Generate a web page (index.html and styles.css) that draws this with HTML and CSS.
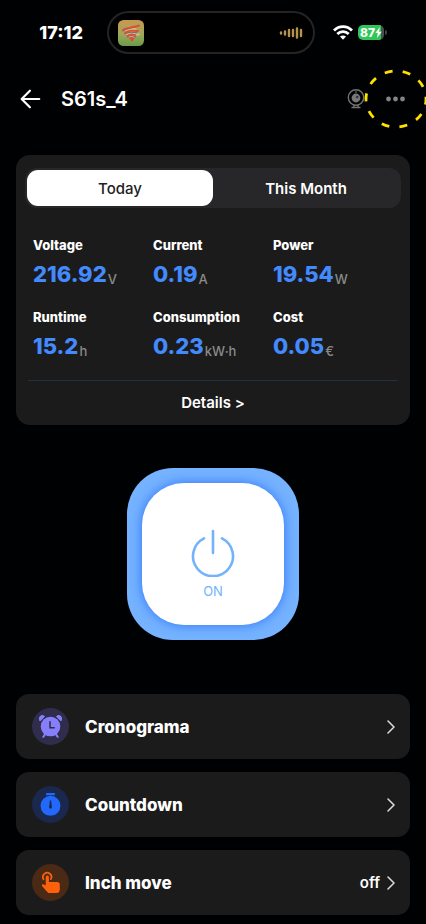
FILE: index.html
```html
<!DOCTYPE html>
<html lang="en">
<head>
<meta charset="utf-8">
<meta name="viewport" content="width=device-width, initial-scale=1">
<title>S61s_4</title>
<link rel="stylesheet" href="styles.css">
</head>
<body>
<div class="status">
  <time class="clock">17:12</time>
  <div class="island">
    <svg class="app-icon" viewBox="0 0 26 26" aria-hidden="true">
      <defs>
        <linearGradient id="tile" x1="0" y1="0" x2="0" y2="1">
          <stop offset="0" stop-color="#c69a50"/>
          <stop offset=".55" stop-color="#9fa75a"/>
          <stop offset="1" stop-color="#689d49"/>
        </linearGradient>
      </defs>
      <rect width="26" height="26" rx="5.5" fill="url(#tile)"/>
      <path d="M7 8l4-2 5 1 4 4 2 4-5 1-3 4-3-4-4-2z" fill="#dfcf8c" opacity=".75"/>
      <g fill="none" stroke-linecap="round">
        <path d="M5 11C9 8 15 8 21 6M7 14c4-3 9-2 13-1M9.500 17c2-2 5-2 8 0" stroke="#776984" stroke-width="1.200"/>
        <path d="M5 10C9 6 15 8 21 5.500M7 13c4-4 8-2 13-2M9.500 16c2-2 5-2 8-1M12 18.500c1-1 2-1 3.500 0" stroke="#df4f30" stroke-width="1.800"/>
      </g>
      <circle cx="14" cy="20" r="1.200" fill="#d64b30"/>
    </svg>
    <svg class="wave" viewBox="0 0 24 12" aria-hidden="true">
      <g stroke="#b6924f" stroke-width="2.400" stroke-linecap="round">
        <path d="M2 5.500v1M6 4.500v3M10 3v6M14 3v6M18 1.500v9M22 3v6"/>
      </g>
    </svg>
  </div>
  <div class="signals">
    <svg class="wifi" viewBox="0 0 20 15" role="img" aria-label="Wi-Fi">
      <g fill="none" stroke="#fff" stroke-width="2.800">
        <path d="M1 5.500C6 .4 14 .4 19 5.500"/>
        <path d="M4.300 9c3.300-3.200 8.100-3.200 11.400 0"/>
      </g>
      <path d="M7 11.600c1.800-1.600 4.200-1.600 6 0L10 14.700z" fill="#fff"/>
    </svg>
    <div class="battery">
      <span>87</span>
      <svg viewBox="0 0 7 11" aria-hidden="true"><path d="M4.800 0L.3 6h2.500L2 11l4.700-6.300H4.100z" fill="#fff"/></svg>
    </div>
    <i class="nub"></i>
  </div>
</div>

<header class="topbar">
  <button class="icon-btn" aria-label="Back">
    <svg class="back" viewBox="0 0 20 18"><path d="M17.500 9H2M9 1.500L1.500 9 9 16.500" fill="none" stroke="#fff" stroke-width="2" stroke-linecap="round" stroke-linejoin="round"/></svg>
  </button>
  <h1>S61s_4</h1>
  <button class="icon-btn camera" aria-label="Camera">
    <svg viewBox="0 0 18 20">
      <g fill="none" stroke="#727272" stroke-width="1.400">
        <circle cx="9" cy="8.500" r="7.700"/>
        <path d="M7 16v2M11 16v2M4.500 18.500h9"/>
      </g>
      <circle cx="9" cy="9" r="4.400" fill="#777"/>
      <circle cx="10.200" cy="8" r="1.300" fill="#333"/>
      <circle cx="9" cy="3" r=".8" fill="#888"/>
    </svg>
  </button>
  <button class="icon-btn more" aria-label="More">
    <svg class="dots" viewBox="0 0 20 6" fill="#858585"><circle cx="3" cy="3" r="2.400"/><circle cx="10" cy="3" r="2.400"/><circle cx="17" cy="3" r="2.400"/></svg>
    <svg class="ring" viewBox="0 0 64 60" aria-hidden="true"><ellipse cx="32" cy="30" rx="30" ry="28" pathLength="100" fill="none" stroke="#ffe000" stroke-width="2.800" stroke-dasharray="4.400 5.600" stroke-dashoffset="1.300"/></svg>
  </button>
</header>

<main>
  <section class="card">
    <div class="tabs">
      <button class="tab active">Today</button>
      <button class="tab">This Month</button>
    </div>
    <dl class="stats">
      <div><dt>Voltage</dt><dd>216.92<small>V</small></dd></div>
      <div><dt>Current</dt><dd>0.19<small>A</small></dd></div>
      <div><dt>Power</dt><dd>19.54<small>W</small></dd></div>
      <div><dt>Runtime</dt><dd>15.2<small>h</small></dd></div>
      <div><dt>Consumption</dt><dd>0.23<small>kW·h</small></dd></div>
      <div><dt>Cost</dt><dd>0.05<small>€</small></dd></div>
    </dl>
    <a class="details" href="#">Details &gt;</a>
  </section>

  <button class="power">
    <span class="power-face">
      <svg viewBox="0 0 44 48" aria-hidden="true"><g fill="none" stroke="#72b3fb" stroke-width="2.600" stroke-linecap="round"><path d="M22 2v22M13 9.300a20 20 0 1 0 18 0"/></g></svg>
      <span>ON</span>
    </span>
  </button>

  <nav class="rows">
    <a class="row" href="#">
      <span class="badge violet">
        <svg viewBox="0 0 24 24">
          <g fill="none" stroke="#8580fa" stroke-width="2" stroke-linecap="round"><path d="M6.500 20l-2 2.800M17.500 20l2 2.800"/></g>
          <path d="M1.200 6.300A3.300 3.300 0 0 1 5.800 1.500zM22.800 6.300a3.300 3.300 0 0 0-4.600-4.800z" fill="#8580fa" stroke="#8580fa" stroke-width="1" stroke-linejoin="round"/>
          <circle cx="12" cy="12" r="10.200" fill="#8580fa"/>
          <path d="M11.500 6.500v6.700h5" fill="none" stroke="#302d4c" stroke-width="1.600"/>
        </svg>
      </span>
      <span class="name">Cronograma</span>
      <svg class="chev" viewBox="0 0 8 14"><path d="M1 1l6 6-6 6"/></svg>
    </a>
    <a class="row" href="#">
      <span class="badge blue">
        <svg viewBox="0 0 24 26">
          <rect x="7" y="0" width="10" height="2.600" rx=".6" fill="#2268fc"/>
          <circle cx="12" cy="14.500" r="11.300" fill="#2268fc"/>
          <path d="M11.300 8.500h1.400l.8 7a1.600 1.600 0 1 1-3 0z" fill="#19284c"/>
        </svg>
      </span>
      <span class="name">Countdown</span>
      <svg class="chev" viewBox="0 0 8 14"><path d="M1 1l6 6-6 6"/></svg>
    </a>
    <a class="row" href="#">
      <span class="badge orange">
        <svg viewBox="0 0 24 26">
          <path d="M4.100 9.300A4.800 4.800 0 1 1 12.400 9.200" fill="none" stroke="#fe610c" stroke-width="2" stroke-linecap="round"/>
          <path d="M6.600 6.900a1.800 1.800 0 0 1 3.600 0v5.600h9.300a3 3 0 0 1 3 3V21a4 4 0 0 1-4 4h-7.200a4 4 0 0 1-3-1.400l-5.600-6.400c-1.400-1.700.4-2.500 1.500-2l2.400 1.200z" fill="#fe610c"/>
        </svg>
      </span>
      <span class="name">Inch move</span>
      <span class="value">off</span>
      <svg class="chev" viewBox="0 0 8 14"><path d="M1 1l6 6-6 6"/></svg>
    </a>
  </nav>
</main>
</body>
</html>
```
FILE: styles.css
```css
* {
  box-sizing: border-box;
}

body {
  margin: 0;
  background: #000103;
  color: #fff;
  font-family: Inter, "Liberation Sans", sans-serif;
  overflow-x: hidden;
}

button {
  margin: 0;
  padding: 0;
  border: 0;
  background: none;
  color: inherit;
  font: inherit;
}

a {
  color: inherit;
  text-decoration: none;
}

svg {
  display: block;
}

.status {
  display: grid;
  grid-template-columns: 1fr 208px 1fr;
  align-items: center;
  padding: 11px 4px 0 0;
}

.clock {
  padding-right: 24px;
  text-align: right;
  font-size: 18px;
  font-weight: 800;
}

.island {
  display: flex;
  align-items: center;
  justify-content: space-between;
  height: 43px;
  padding: 0 10px 0 9px;
  border: 2px solid #242424;
  border-radius: 22px;
  background: #000;
}

.app-icon {
  width: 26px;
  height: 26px;
}

.wave {
  width: 24px;
  height: 12px;
}

.signals {
  display: flex;
  align-items: center;
  padding-left: 18px;
}

.wifi {
  width: 20px;
  height: 15px;
}

.battery {
  display: flex;
  align-items: center;
  justify-content: center;
  width: 26px;
  height: 15px;
  margin-left: 5px;
  border-radius: 5px;
  background: linear-gradient(90deg, #30c759 88%, #47524a 88%);
  font-size: 12px;
  font-weight: 800;
  line-height: 15px;
}

.battery svg {
  width: 7px;
  height: 11px;
}

.nub {
  width: 2px;
  height: 5px;
  margin-left: 1px;
  border-radius: 0 2px 2px 0;
  background: #444;
}

.topbar {
  display: flex;
  align-items: center;
  height: 90px;
  padding: 0 20px;
}

.topbar h1 {
  flex: 1;
  margin: 0 0 0 19px;
  font-size: 20px;
  font-weight: 600;
}

.back {
  width: 22px;
  height: 20px;
}

.camera svg {
  width: 18px;
  height: 20px;
}

.more {
  position: relative;
  margin-left: 20px;
}

.dots {
  width: 21px;
  height: 6px;
}

.ring {
  position: absolute;
  top: 50%;
  left: 50%;
  width: 64px;
  height: 60px;
  transform: translate(-50%, -50%);
}

main {
  padding: 11px 16px 9px;
}

.card {
  padding: 13px 9px 0;
  border-radius: 14px;
  background: #1b1b1b;
}

.tabs {
  display: grid;
  grid-template-columns: 1fr 1fr;
  padding: 2px;
  border-radius: 12px;
  background: #272729;
}

.tab {
  height: 36px;
  border-radius: 11px;
  font-size: 15px;
  font-weight: 600;
}

.tab.active {
  background: #fff;
  color: #222;
  font-weight: 500;
}

.stats {
  display: grid;
  grid-template-columns: repeat(3, 120px);
  row-gap: 20px;
  margin: 0 3px;
  padding: 28px 5px 20px;
  border-bottom: 1px solid #252f3d;
}

.stats dt {
  font-size: 13px;
  font-weight: 800;
  line-height: 18px;
}

.stats dd {
  margin: 6px 0 0;
  color: #438afd;
  font-size: 22px;
  font-weight: 800;
  line-height: 28px;
  white-space: nowrap;
}

.stats small {
  display: inline-block;
  margin-left: 1px;
  color: #8a8a8a;
  font-size: 13px;
  font-weight: 500;
  line-height: 16px;
  vertical-align: -2px;
}

.details {
  display: block;
  font-size: 15px;
  font-weight: 600;
  line-height: 44px;
  text-align: center;
}

.power {
  display: grid;
  place-items: center;
  width: 172px;
  height: 172px;
  margin: 43px auto 54px;
  border-radius: 46px;
  background: #75b2ff;
}

.power-face {
  display: flex;
  flex-direction: column;
  align-items: center;
  gap: 6px;
  width: 142px;
  height: 142px;
  padding-top: 46px;
  border-radius: 42px;
  background: #fff;
  box-shadow: 0 0 12px #2f76f8;
  color: #72b3fb;
  font-size: 13px;
  line-height: 16px;
}

.power-face svg {
  width: 44px;
  height: 48px;
}

.rows {
  display: grid;
  gap: 13px;
}

.row {
  display: flex;
  align-items: center;
  height: 65px;
  padding: 0 15px 0 16px;
  border-radius: 13px;
  background: #1b1b1b;
}

.badge {
  display: grid;
  place-items: center;
  width: 37px;
  height: 37px;
  border-radius: 50%;
}

.badge svg {
  width: 23px;
  height: 23px;
}

.violet {
  background: #302d4c;
}

.blue {
  background: #19284c;
}

.orange {
  background: #4a2915;
}

.name {
  flex: 1;
  margin-left: 16px;
  font-size: 17px;
  font-weight: 800;
}

.value {
  margin-right: 7px;
  font-size: 15px;
  font-weight: 600;
}

.chev {
  width: 8px;
  height: 14px;
  fill: none;
  stroke: #ddd;
  stroke-width: 1.5;
  stroke-linecap: round;
  stroke-linejoin: round;
}
```
